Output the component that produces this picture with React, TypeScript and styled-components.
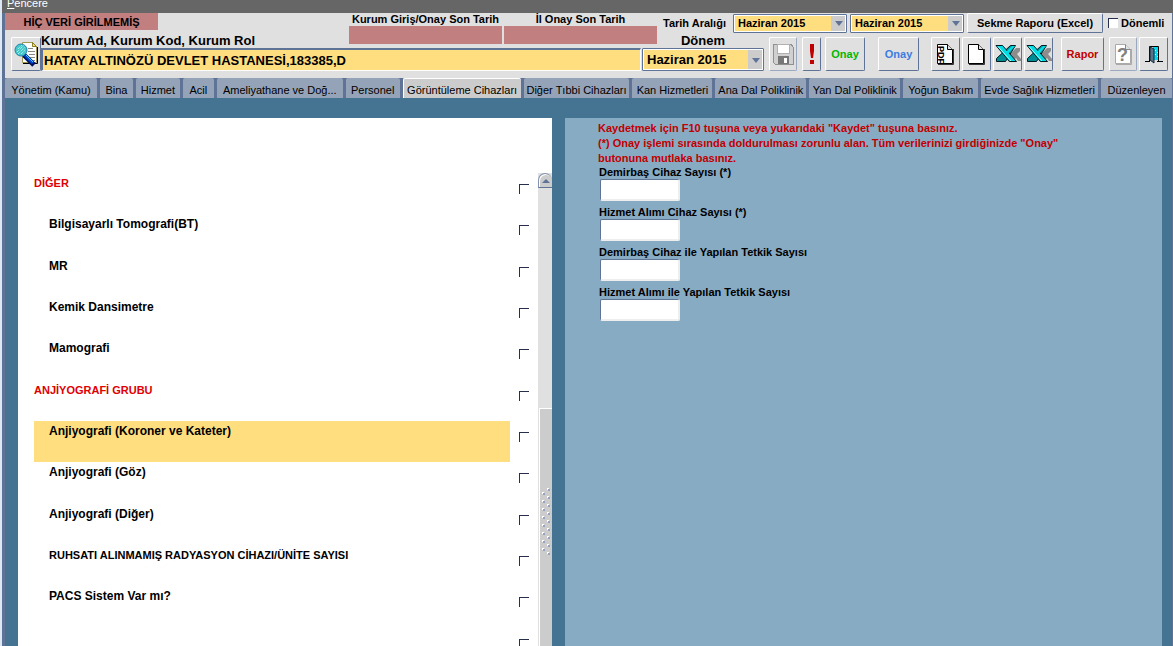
import React from 'react';
import styled, { createGlobalStyle, css } from 'styled-components';

const c = {
  face: '#e0e0e0',
  slate: '#5f7396',
  yellow: '#ffde80',
  rose: '#c17f7f',
  teal: '#447492',
  panel: '#88abc4',
  grey: '#cccccc',
  red: '#c00000',
};

const GlobalStyle = createGlobalStyle`
  * { box-sizing: border-box; }
  body {
    margin: 0;
    overflow: hidden;
    background: ${c.teal};
    color: #000;
    font: 11px/15px "Liberation Sans", Arial, sans-serif;
  }
  button, input, select { font: inherit; color: inherit; margin: 0; }
`;

const Frame = styled.div`
  display: flex;
  flex-direction: column;
  height: 100vh;
  overflow: hidden;
  border-left: 2px solid #dce8f4;
`;

const MenuBar = styled.nav`
  flex: none;
  display: flex;
  align-items: flex-end;
  height: 13px;
  padding: 0 5px 4px;
  background: #666;
`;

const MenuLink = styled.a`
  color: #fff;
  font-size: 11px;
  line-height: 12px;
  text-decoration: none;
`;

const Workspace = styled.div`
  flex: 1;
  min-height: 0;
  display: flex;
  flex-direction: column;
  border: solid ${c.slate};
  border-width: 0 1px 0 3px;
`;

const Toolbar = styled.header`
  flex: none;
  display: grid;
  grid-template-columns: 36px minmax(0, 1fr) 155px 137px 16px 108px 407px;
  grid-template-rows: 20px 15px 23px;
  padding-bottom: 7px;
  background: ${c.face};
`;

const Status = styled.strong`
  grid-area: 1 / 1 / 2 / 3;
  width: 153px;
  height: 17px;
  line-height: 18px;
  text-align: center;
  background: ${c.rose};
`;

const Caption = styled.label`
  grid-area: 2 / 2 / 3 / 3;
  font-size: 13px;
  font-weight: bold;
`;

const DateField = styled.label<{ $col: number; $span: number }>`
  grid-row: 1 / 3;
  grid-column: ${(p) => p.$col} / span ${(p) => p.$span};
  display: flex;
  flex-direction: column;
  align-items: center;
  width: 153px;
  height: 31px;
  font-weight: bold;
  line-height: 13px;
  white-space: nowrap;
`;

const DateValue = styled.input`
  width: 100%;
  height: 18px;
  padding: 0;
  border: 0;
  background: ${c.rose};
`;

const InstitutionField = styled.input`
  grid-area: 3 / 2 / 4 / 5;
  width: 100%;
  height: 23px;
  padding: 0 1px;
  border: solid;
  border-width: 2px 1px 1px 2px;
  border-color: ${c.slate} #fff #fff ${c.slate};
  background: ${c.yellow};
  font-size: 13px;
  font-weight: bold;
`;

const PeriodCaption = styled.label`
  grid-area: 2 / 5 / 3 / 7;
  text-align: center;
  font-size: 13px;
  font-weight: bold;
`;

const PeriodCell = styled.div`
  grid-area: 3 / 5 / 4 / 7;
  display: flex;
  padding: 0 1px;
`;

const ComboBox = styled.div<{ $large?: boolean; $width: number }>`
  position: relative;
  flex: none;
  width: ${(p) => p.$width}px;
  height: ${(p) => (p.$large ? 23 : 19)}px;
  font-size: ${(p) => (p.$large ? 13 : 11)}px;
  font-weight: bold;

  select {
    appearance: none;
    width: 100%;
    height: 100%;
    padding: 0 16px 0 4px;
    border: 1px solid ${c.slate};
    outline: 1px solid #fff;
    outline-offset: -2px;
    border-radius: 1px;
    background: linear-gradient(to left, ${c.grey} 15px, ${c.yellow} 15px);
  }

  svg {
    position: absolute;
    right: 4px;
    top: calc(50% - 2px);
    pointer-events: none;
  }
`;

const RangeRow = styled.div`
  grid-area: 1 / 6 / 2 / 8;
  display: flex;
  align-items: center;
  gap: 3px;
  padding-left: 6px;
  font-weight: bold;
  white-space: nowrap;
`;

const RangeLabel = styled.span`
  width: 67px;
`;

const Button = styled.button<{ $width: number; $color?: string; $gap?: number }>`
  flex: none;
  display: flex;
  align-items: center;
  justify-content: center;
  width: ${(p) => p.$width}px;
  height: 100%;
  margin-left: ${(p) => p.$gap ?? 2}px;
  padding: 0;
  border: 1px solid;
  border-color: #fff ${c.slate} ${c.slate} #fff;
  border-radius: 2px;
  background: ${c.face};
  color: ${(p) => p.$color ?? '#000'};
  font-weight: bold;
  &:disabled { border-color: #fff #9aa8c0 #9aa8c0 #fff; }
`;

const SearchCell = styled.div`
  grid-area: 2 / 1 / 4 / 2;
  padding: 4px 0 0 4px;
`;

const Actions = styled.div`
  grid-area: 2 / 7 / 4 / 8;
  display: flex;
  padding: 4px 0 0 2px;
`;

const PeriodicLabel = styled.label`
  display: flex;
  align-items: center;
  gap: 3px;
  padding-left: 2px;
`;

const Tick = styled.input`
  appearance: none;
  flex: none;
  width: 10px;
  height: 10px;
  border: solid #26304c;
  border-width: 1px 0 0 1px;
  border-radius: 0;
  background: #fff;
  &:checked { background: #26304c; }
`;

const Tabs = styled.div`
  flex: none;
  display: flex;
  gap: 3px;
  height: 20px;
  background: ${c.slate};
`;

const Tab = styled.button<{ $width: number }>`
  flex: ${(p) => p.$width} 1 0;
  min-width: 0;
  padding: 4px 0 0;
  border: 0;
  border-radius: 2px 2px 0 0;
  background: #94a3b8;
  line-height: 16px;
  text-align: center;
  white-space: nowrap;
  overflow: hidden;
  ${(p) =>
    p['aria-selected'] &&
    css`
      padding-top: 3px;
      border: solid #fff;
      border-width: 1px 0 0 1px;
      background: ${c.grey};
    `}
`;

const Content = styled.main`
  flex: 1;
  min-height: 0;
  display: flex;
  gap: 13px;
  padding: 20px 10px 0 13px;
  background: ${c.teal};
`;

const DevicePanel = styled.section`
  flex: 0 0 534px;
  display: flex;
  padding: 55px 0 0 16px;
  overflow: hidden;
  background: #fff;
`;

const DeviceList = styled.ul`
  flex: 1;
  display: grid;
  grid-template-rows: repeat(12, 1fr);
  height: 496px;
  margin: 0;
  padding: 0;
  list-style: none;
`;

const DeviceRow = styled.li`
  display: flex;
  gap: 9px;
`;

const DeviceName = styled.label<{ $group?: boolean; $caps?: boolean; $active?: boolean }>`
  flex: 0 0 476px;
  padding: 2px 0 0 ${(p) => (p.$group ? 0 : 15)}px;
  color: ${(p) => (p.$group ? '#e00000' : '#000')};
  background: ${(p) => (p.$active ? c.yellow : 'transparent')};
  font-size: ${(p) => (p.$group || p.$caps ? 11 : 12)}px;
  line-height: 16px;
  font-weight: bold;
`;

const RowTick = styled(Tick)`
  margin-top: 11px;
`;

const ScrollBar = styled.div`
  flex: 0 0 14px;
  display: flex;
  flex-direction: column;
  height: 496px;
  background: ${c.face};
`;

const ScrollUp = styled.button`
  height: 15px;
  padding: 0;
  border: 1px solid #8494b0;
  border-bottom-color: ${c.slate};
  border-right: 0;
  border-radius: 7px 7px 0 0;
  background: ${c.grey};
  box-shadow: inset 1px 1px #fff;
  line-height: 0;
`;

const ScrollThumb = styled.div`
  flex: 1;
  margin: 220px 0 0 1px;
  padding: 79px 0 0 2px;
  border: solid #fff;
  border-width: 1px 0 0 1px;
  background: ${c.grey};
`;

const FormPanel = styled.section`
  flex: 1;
  padding: 3px 33px;
  background: ${c.panel};
`;

const Notice = styled.p`
  max-width: 500px;
  margin: 0;
  color: ${c.red};
  font-weight: bold;
`;

const Field = styled.label`
  display: flex;
  flex-direction: column;
  height: 40px;
  padding-left: 1px;
  font-weight: bold;
  line-height: 12px;
`;

const NumberBox = styled.input`
  width: 80px;
  height: 22px;
  margin: 1px 0 0 1px;
  border: solid;
  border-width: 1px 2px 2px 1px;
  border-color: ${c.slate} #eee #eee ${c.slate};
  border-radius: 2px;
  background: #fff;
`;

const Arrow = () => (
  <svg width="8" height="5" aria-hidden="true">
    <path d="M0 0h8L4 5z" fill={c.slate} />
  </svg>
);

const Combo = ({ id, label, width, large }: { id: string; label: string; width: number; large?: boolean }) => (
  <ComboBox $width={width} $large={large}>
    <select id={id} aria-label={label}>
      <option>Haziran 2015</option>
    </select>
    <Arrow />
  </ComboBox>
);

const SearchIcon = () => (
  <svg width="25" height="26" aria-hidden="true">
    <path d="M8.500 1.500h10l4 4v16h-14z" fill="#fff" stroke="#a09850" />
    <path d="M23.500 6v16.500H9" fill="none" stroke="#000" />
    <path d="M18.500 1.500v4h4z" fill="#f4e070" stroke="#8a7a20" />
    <path d="M14 7.500h5M14 10.500h7M15 13.500h6M16 16.500h5M18 19.500h3" stroke="#888" />
    <path d="M10 14l10 10" stroke="#001060" strokeWidth="5" />
    <path d="M11 14l8 8" stroke="#0048d8" strokeWidth="3" />
    <path d="M12 14l7 7" stroke="#50c8ff" />
    <circle cx="7" cy="9" r="6" fill="#48c8c8" stroke="#2080b0" />
    <path d="M4 8l4-4M3 11l7-7M4 13l7-7M7 13l4-4" stroke="#c8ffff" strokeDasharray="1 1" />
  </svg>
);

const SaveIcon = () => (
  <svg width="22" height="22" shapeRendering="crispEdges" aria-hidden="true">
    <path d="M1 1h18l2 3v17H3l-2-2z" fill="#d0d0d0" stroke="#909090" />
    <path d="M5 1h12v9H5z" fill="#fff" stroke="#b0b0b0" />
    <path d="M6 13h11v8H6z" fill="#777" />
    <path d="M12 15h3v5h-3z" fill="#fff" />
  </svg>
);

const AlertIcon = () => (
  <svg width="6" height="20" aria-hidden="true">
    <path d="M1 0h4v7L4 14H2L1 7zM1 16h4v4H1z" fill={c.red} />
  </svg>
);

const PageIcon = ({ children, muted }: { children?: React.ReactNode; muted?: boolean }) => (
  <svg width="19" height="23" aria-hidden="true">
    <path d="M2 21.500h15.500V6" fill="none" stroke={muted ? '#aaa' : '#333'} />
    <path d="M1.500 1.500h10l5 5v14h-15z" fill="#fff" stroke={muted ? '#aaa' : '#000'} />
    <path d="M11.500 1.500v5h5" fill={c.face} stroke={muted ? '#888' : '#000'} />
    {children}
  </svg>
);

const PdfIcon = () => (
  <PageIcon>
    <text transform="translate(2 3) rotate(90)" fontSize="9" fontWeight="bold">
      PDF
    </text>
  </PageIcon>
);

const HelpIcon = () => (
  <PageIcon muted>
    <text x="3" y="18" fontSize="18" fontWeight="bold" fill="#808080">
      ?
    </text>
  </PageIcon>
);

const ExcelIcon = () => (
  <svg width="26" height="20" aria-hidden="true">
    <path d="M25 4h-4L11 14l3 4h3l4-4 2 3h3v-2l-4-5 3-3z" fill="#8c8c8c" />
    <path d="M20.500 1.500h-5L1.500 14.500v3h9z" fill="#008c94" stroke="#001820" />
    <path d="M1 1.500h6.500l14 16h-7z" fill="#00dce4" stroke="#001820" />
    <path d="M20 2h-3l-7 7 2 2z" fill="#00dce4" />
    <path d="M3 2.500l13 14.500" stroke="#a0ffff" />
  </svg>
);

const DoorIcon = () => (
  <svg width="18" height="19" aria-hidden="true">
    <path d="M4.500 16V1.500h9V16M0 16.500h5M12 16.500h6" fill="none" stroke="#000" />
    <path d="M8 2h5v13H8z" fill="#00d8f0" />
    <path d="M5 2l4 2v14l-4-3z" fill="#5c7088" stroke="#102838" />
    <path d="M10 5.500h1M12 7.500h1M10 9.500h1M12 11.500h1" stroke="#fff" />
  </svg>
);

const Grip = () => (
  <svg width="9" height="68" shapeRendering="crispEdges" aria-hidden="true">
    {Array.from({ length: 17 }, (_, i) => (
      <g key={i} transform={`translate(${i % 2 ? 0 : 5} ${i * 4})`}>
        <path d="M1 1h2v2H1z" fill="#94a3c0" />
        <path d="M0 0h2v1H1v1H0z" fill="#fff" />
      </g>
    ))}
  </svg>
);

const tabs: [string, number][] = [
  ['Yönetim (Kamu)', 92],
  ['Bina', 33],
  ['Hizmet', 44],
  ['Acil', 31],
  ['Ameliyathane ve Doğ...', 126],
  ['Personel', 54],
  ['Görüntüleme Cihazları', 117],
  ['Diğer Tıbbi Cihazları', 106],
  ['Kan Hizmetleri', 80],
  ['Ana Dal Poliklinik', 91],
  ['Yan Dal Poliklinik', 91],
  ['Yoğun Bakım', 75],
  ['Evde Sağlık Hizmetleri', 117],
  ['Düzenleyen', 71],
];

const devices: { name: string; group?: boolean; caps?: boolean; active?: boolean }[] = [
  { name: 'DİĞER', group: true },
  { name: 'Bilgisayarlı Tomografi(BT)' },
  { name: 'MR' },
  { name: 'Kemik Dansimetre' },
  { name: 'Mamografi' },
  { name: 'ANJİYOGRAFİ GRUBU', group: true },
  { name: 'Anjiyografi (Koroner ve Kateter)', active: true },
  { name: 'Anjiyografi (Göz)' },
  { name: 'Anjiyografi (Diğer)' },
  { name: 'RUHSATI ALINMAMIŞ RADYASYON CİHAZI/ÜNİTE SAYISI', caps: true },
  { name: 'PACS Sistem Var mı?' },
  { name: '' },
];

const fields = [
  'Demirbaş Cihaz Sayısı (*)',
  'Hizmet Alımı Cihaz Sayısı (*)',
  'Demirbaş Cihaz ile Yapılan Tetkik Sayısı',
  'Hizmet Alımı ile Yapılan Tetkik Sayısı',
];

export default function App() {
  return (
    <Frame>
      <GlobalStyle />
      <MenuBar>
        <MenuLink href="#pencere"><u>P</u>encere</MenuLink>
      </MenuBar>
      <Workspace>
        <Toolbar>
          <Status>HİÇ VERİ GİRİLMEMİŞ</Status>
          <SearchCell>
            <Button $width={30} $gap={2} aria-label="Kurum ara"><SearchIcon /></Button>
          </SearchCell>
          <Caption htmlFor="kurum">Kurum Ad, Kurum Kod, Kurum Rol</Caption>
          <InstitutionField id="kurum" defaultValue="HATAY ALTINÖZÜ DEVLET HASTANESİ,183385,D" />
          <DateField $col={3} $span={1}>
            Kurum Giriş/Onay Son Tarih
            <DateValue readOnly />
          </DateField>
          <DateField $col={4} $span={2}>
            İl Onay Son Tarih
            <DateValue readOnly />
          </DateField>
          <PeriodCaption htmlFor="donem">Dönem</PeriodCaption>
          <PeriodCell>
            <Combo id="donem" label="Dönem" width={122} large />
          </PeriodCell>
          <RangeRow>
            <RangeLabel>Tarih Aralığı</RangeLabel>
            <Combo id="baslangic" label="Başlangıç" width={114} />
            <Combo id="bitis" label="Bitiş" width={114} />
            <Button $width={136} $gap={0}>Sekme Raporu (Excel)</Button>
            <PeriodicLabel>
              <Tick type="checkbox" />
              Dönemli
            </PeriodicLabel>
          </RangeRow>
          <Actions>
            <Button $width={28} disabled aria-label="Kaydet"><SaveIcon /></Button>
            <Button $width={19} $gap={5} aria-label="Uyarı"><AlertIcon /></Button>
            <Button $width={40} $gap={4} $color="#00b800">Onay</Button>
            <Button $width={41} $gap={13} $color="#3c7ce0">Onay</Button>
            <Button $width={29} $gap={12} aria-label="PDF"><PdfIcon /></Button>
            <Button $width={29} aria-label="Yeni"><PageIcon /></Button>
            <Button $width={29} aria-label="Excel"><ExcelIcon /></Button>
            <Button $width={29} aria-label="Excel listesi"><ExcelIcon /></Button>
            <Button $width={43} $gap={8} $color={c.red}>Rapor</Button>
            <Button $width={28} $gap={5} disabled aria-label="Yardım"><HelpIcon /></Button>
            <Button $width={29} aria-label="Çıkış"><DoorIcon /></Button>
          </Actions>
        </Toolbar>
        <Tabs role="tablist">
          {tabs.map(([name, width]) => (
            <Tab key={name} role="tab" $width={width} aria-selected={name === 'Görüntüleme Cihazları'}>
              {name}
            </Tab>
          ))}
        </Tabs>
        <Content>
          <DevicePanel>
            <DeviceList>
              {devices.map((d, i) => (
                <DeviceRow key={i}>
                  <DeviceName htmlFor={`cihaz-${i}`} $group={d.group} $caps={d.caps} $active={d.active}>
                    {d.name}
                  </DeviceName>
                  <RowTick type="checkbox" id={`cihaz-${i}`} />
                </DeviceRow>
              ))}
            </DeviceList>
            <ScrollBar>
              <ScrollUp aria-label="Yukarı">
                <svg width="8" height="4" aria-hidden="true"><path d="M4 0l4 4H0z" fill={c.slate} /></svg>
              </ScrollUp>
              <ScrollThumb><Grip /></ScrollThumb>
            </ScrollBar>
          </DevicePanel>
          <FormPanel>
            <Notice>
              Kaydetmek için F10 tuşuna veya yukarıdaki "Kaydet" tuşuna basınız.
              <br />
              (*) Onay işlemi sırasında doldurulması zorunlu alan. Tüm verilerinizi girdiğinizde "Onay" butonuna
              mutlaka basınız.
            </Notice>
            {fields.map((f) => (
              <Field key={f}>
                {f}
                <NumberBox type="text" />
              </Field>
            ))}
          </FormPanel>
        </Content>
      </Workspace>
    </Frame>
  );
}
